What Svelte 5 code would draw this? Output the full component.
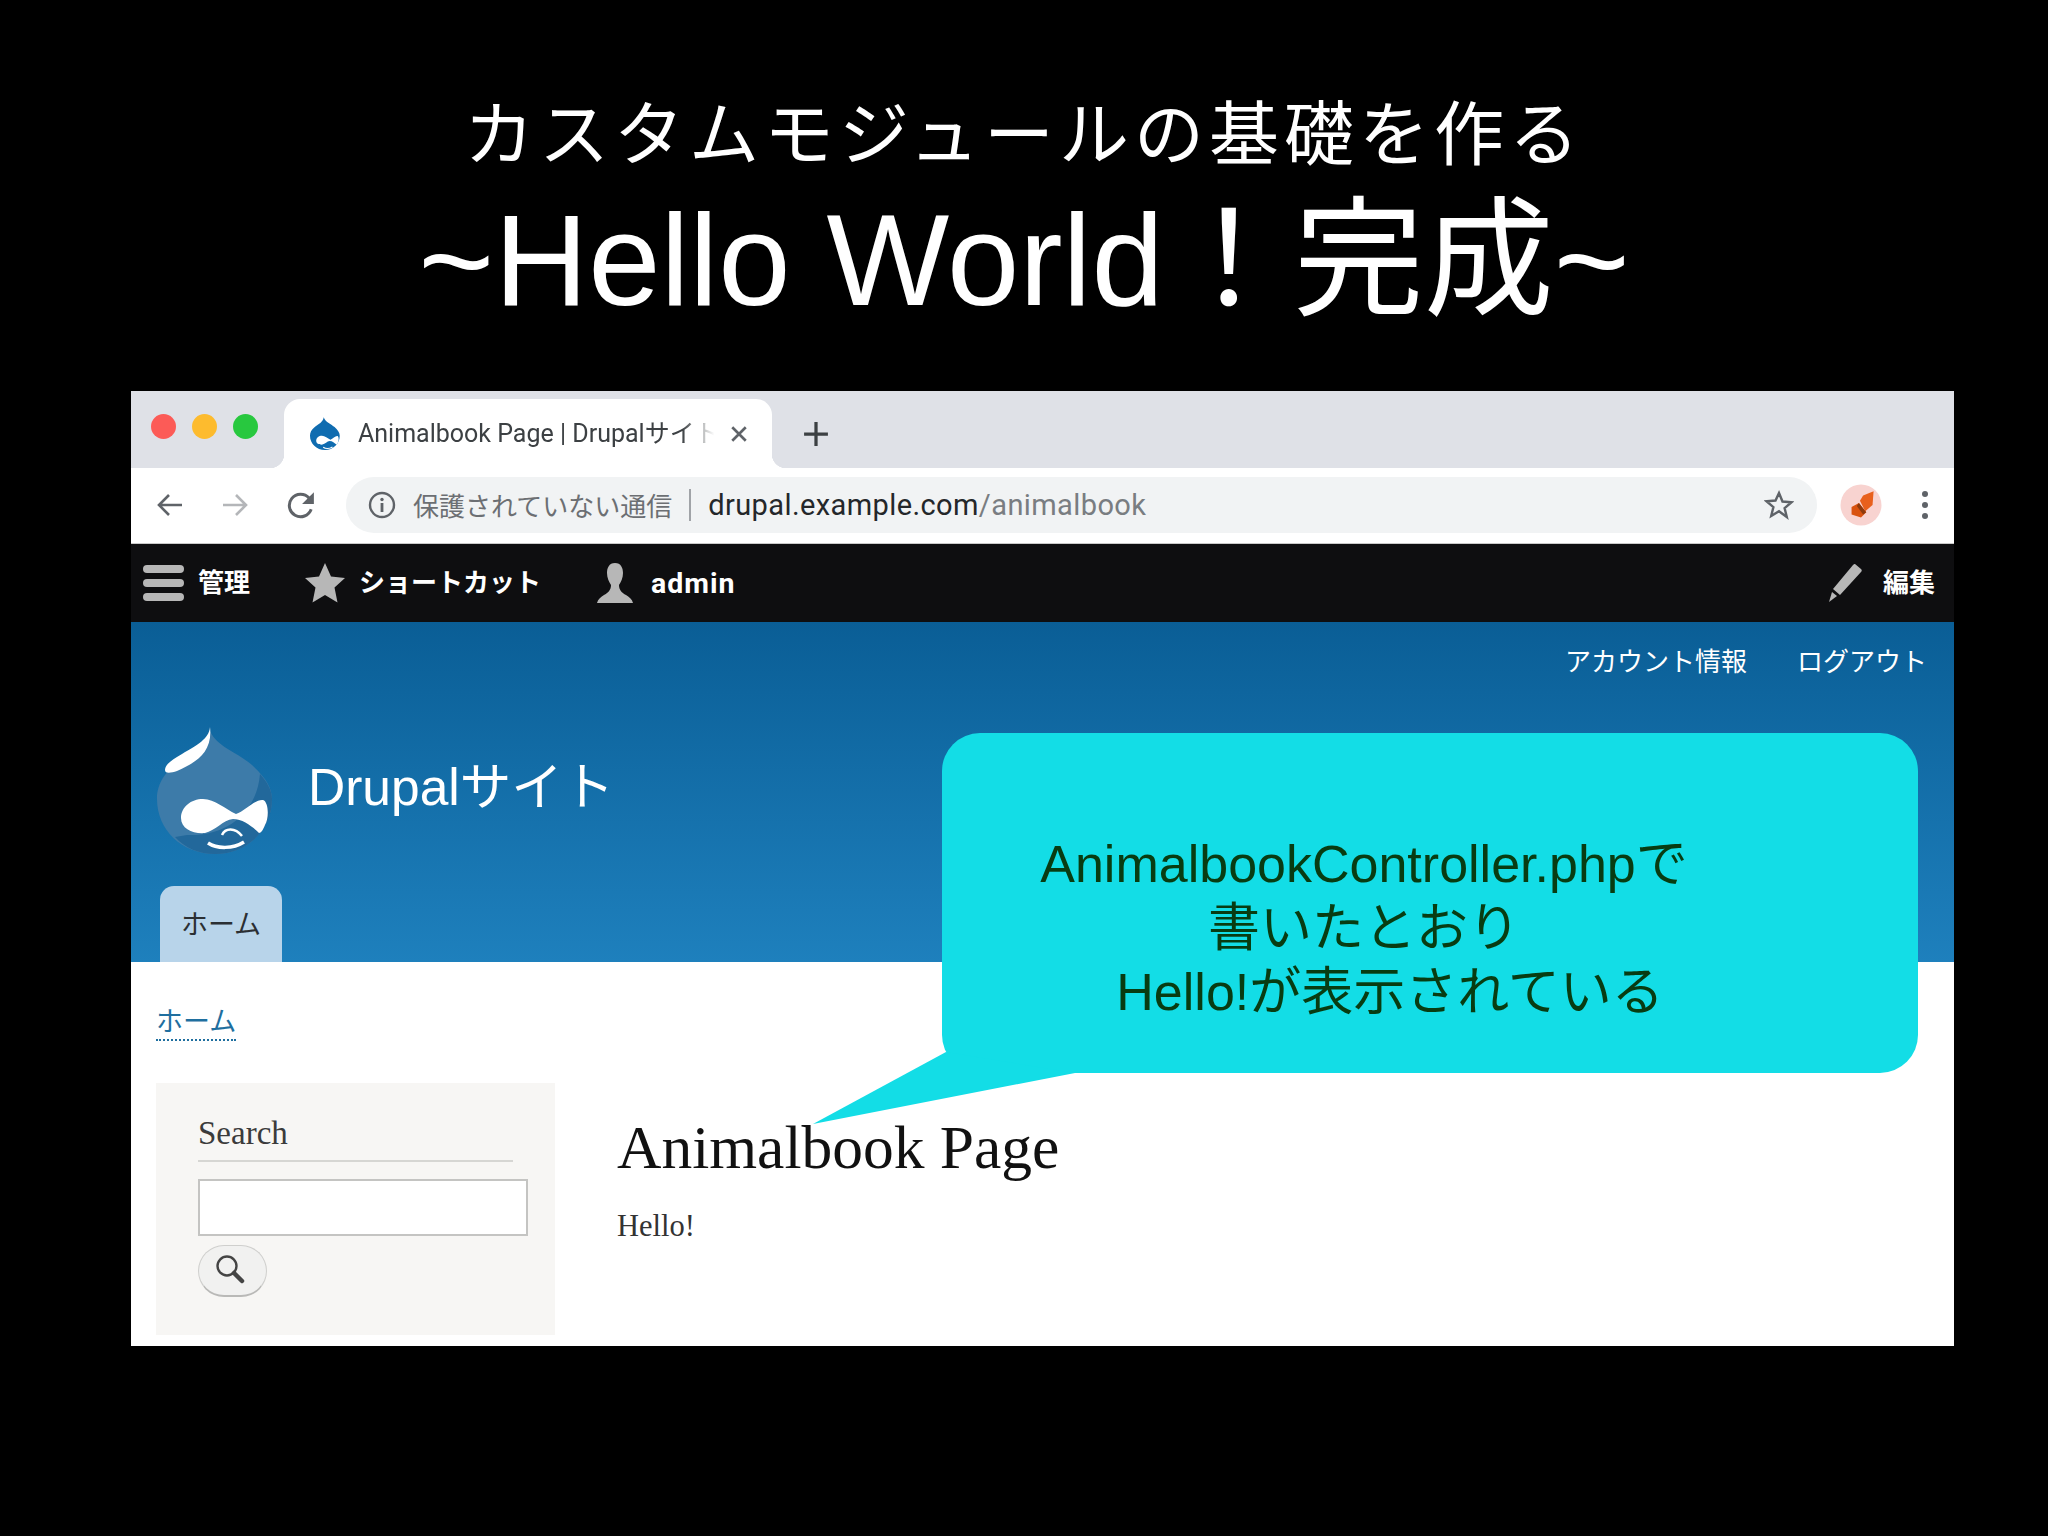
<script>
  const tabTitle = 'Animalbook Page | Drupalサイト'
</script>

<div class="slide">
  <header class="titles">
    <h1 class="sub">カスタムモジュールの基礎を作る</h1>
    <h1 class="main">~Hello World！完成~</h1>
  </header>

  <div class="browser">
    <div class="tabbar">
      <div class="lights">
        <i class="red"></i><i class="yellow"></i><i class="green"></i>
      </div>
      <div class="tab">
        <svg class="favicon" viewBox="0 0 116 130" width="30" height="34">
          <path d="M53 0C60 20 80 25 95 38 108 50 115 60 115 72 115 103 90 127 58 127 25 127 0 103 0 72 0 45 25 33 40 22 46 16 52 10 53 0z" fill="#0f6cb0"/>
          <path d="M24 91C24 80 34 72 46 72 58 72 68 82 79 87 88 84 98 72 106 73 112 75 112 92 108 98 106 103 104 106 102 106 96 100 86 92 76 92 66 93 58 104 48 106 36 107 24 102 24 91z" fill="#fff"/>
          <path d="M51 116C60 122 76 122 87 115" fill="none" stroke="#fff" stroke-width="5"/>
        </svg>
        <span class="tab-title">{tabTitle}</span>
        <svg class="close" viewBox="0 0 16 16" width="18" height="18">
          <path d="M2 2l12 12M14 2L2 14" stroke="#5f6368" stroke-width="2.4"/>
        </svg>
      </div>
      <svg class="plus" viewBox="0 0 24 24" width="26" height="26">
        <path d="M12 1v22M1 12h22" stroke="#3c4043" stroke-width="3"/>
      </svg>
    </div>

    <div class="toolbar">
      <svg class="nav" viewBox="0 0 28 28" width="28" height="28">
        <path d="M26 14H3M13 4L3 14l10 10" fill="none" stroke="#5f6368" stroke-width="2.6"/>
      </svg>
      <svg class="nav" viewBox="0 0 28 28" width="28" height="28">
        <path d="M2 14h23M15 4l10 10-10 10" fill="none" stroke="#b4b6b9" stroke-width="2.6"/>
      </svg>
      <svg class="nav" viewBox="0 0 28 28" width="30" height="30">
        <path d="M23.500 18a10.500 10.500 0 1 1-2-10.500" fill="none" stroke="#5f6368" stroke-width="2.800"/>
        <path d="M26 2v11H15z" fill="#5f6368"/>
      </svg>
      <div class="omnibox">
        <svg viewBox="0 0 28 28" width="28" height="28">
          <circle cx="14" cy="14" r="12" fill="none" stroke="#5f6368" stroke-width="2.400"/>
          <path d="M14 12v9" stroke="#5f6368" stroke-width="2.800"/>
          <circle cx="14" cy="8.500" r="1.700" fill="#5f6368"/>
        </svg>
        <span class="secure">保護されていない通信</span>
        <span class="sep"></span>
        <span class="url">drupal.example.com<span class="path">/animalbook</span></span>
        <svg class="bookmark" viewBox="0 0 30 30" width="30" height="30">
          <path d="M15 3l3.500 8.500 9 .7-6.900 5.900 2.200 8.900L15 21.300 7.200 26l2.200-8.900L2.500 11.200l9-.7z" fill="none" stroke="#5f6368" stroke-width="2.400"/>
        </svg>
      </div>
      <div class="avatar">
        <svg viewBox="0 0 40 40" width="42" height="42">
          <circle cx="20" cy="20" r="19.500" fill="#f8d3d0"/>
          <path d="M19 16l3-5 10-4-1 13-7 6z" fill="#e8601c"/>
          <path d="M11 22l7-4 7 9-5 5-9-3z" fill="#d9520f"/>
          <path d="M18 18l7 9-3 2-6-8z" fill="#8f3a0c"/>
        </svg>
      </div>
      <div class="dots"><i></i><i></i><i></i></div>
    </div>

    <nav class="adminbar">
      <div class="admin-left">
        <div class="admin-item">
          <div class="burger"><i></i><i></i><i></i></div>
          <span class="label">管理</span>
        </div>
        <div class="admin-item">
          <svg viewBox="0 0 40 40" width="40" height="40">
            <path d="M20 0l6 13.500 14 1.500-10.500 9.500 3 15L20 32l-12.500 7.500 3-15L0 15l14-1.500z" fill="#b7b7b7"/>
          </svg>
          <span class="label">ショートカット</span>
        </div>
        <div class="admin-item">
          <svg viewBox="0 0 36 40" width="38" height="40">
            <path d="M18 0c6 0 8 5 8 10 0 5-2 9-4 12 0 5 3 8 7 10 3 2 6 4 7 8H0c1-4 4-6 7-8 4-2 7-5 7-10-2-3-4-7-4-12 0-5 2-10 8-10z" fill="#b7b7b7"/>
          </svg>
          <span class="name">admin</span>
        </div>
      </div>
      <div class="admin-item">
        <svg class="pencil" viewBox="0 0 36 40" width="36" height="40">
          <path d="M28 1l6 5c1 1 1 2 0 3L13 32 6 26 26 2c1-1 1-1 2-1z" fill="#b7b7b7"/>
          <path d="M5 29l5 4-8 6z" fill="#b7b7b7"/>
        </svg>
        <span class="label">編集</span>
      </div>
    </nav>

    <div class="site-head">
      <div class="secondary">
        <span>アカウント情報</span>
        <span>ログアウト</span>
      </div>
      <div class="branding">
        <svg class="logo" viewBox="0 0 116 130" width="116" height="130">
          <path d="M53 4C60 20 80 25 95 38 108 50 115 60 115 72 115 103 90 127 58 127 25 127 0 103 0 72 0 45 25 33 40 22 46 16 52 10 53 4z" fill="#3d7ba9"/>
          <path d="M103 47C110 55 115 63 115 72 115 103 90 127 58 127 42 127 28 121 18 110L30 108C70 110 100 85 103 47z" fill="#22689b"/>
          <path d="M53 0C52 12 40 18 25 27 14 33 8 38 8 43 8 47 14 46 20 44 38 36 56 26 53 0z" fill="#fff"/>
          <path d="M24 91C24 80 34 72 46 72 58 72 68 82 79 87 88 84 98 72 106 73 112 75 112 92 108 98 106 103 104 106 102 106 96 100 86 92 76 92 66 93 58 104 48 106 36 107 24 102 24 91z" fill="#fff"/>
          <path d="M65 108C68 101 78 100 85 109" fill="none" stroke="#fff" stroke-width="2.500"/>
          <path d="M51 116C60 122 76 122 87 115" fill="none" stroke="#fff" stroke-width="3.500"/>
        </svg>
        <span class="site-name">Drupalサイト</span>
      </div>
      <div class="tabs"><span class="home-tab">ホーム</span></div>
    </div>

    <div class="page">
      <div class="crumb"><span>ホーム</span></div>
      <div class="columns">
        <aside class="sidebar">
          <h2>Search</h2>
          <div class="search-input"></div>
          <div class="search-btn">
            <svg viewBox="0 0 30 30" width="30" height="30">
              <circle cx="12" cy="12" r="9.500" fill="none" stroke="#444" stroke-width="2.400"/>
              <path d="M19 19l8 8" stroke="#444" stroke-width="4.500" stroke-linecap="round"/>
            </svg>
          </div>
        </aside>
        <main class="content">
          <h1>Animalbook Page</h1>
          <p>Hello!</p>
        </main>
      </div>
    </div>
  </div>

  <div class="callout">
    <svg class="tail" viewBox="0 0 270 80" width="270" height="80">
      <path d="M136 0L3 72 265 21z" fill="#13dde6"/>
    </svg>
    <span>AnimalbookController.phpで</span>
    <span>書いたとおり</span>
    <span class="shift">Hello!が表示されている</span>
  </div>
</div>

<style>
  :global(body) {
    margin: 0;
    background: #000;
  }
  .slide {
    position: relative;
    width: 2048px;
    height: 1536px;
    background: #000;
    font-family: "Liberation Sans", "Noto Sans CJK JP", sans-serif;
    overflow: hidden;
  }
  .titles {
    height: 391px;
    text-align: center;
    color: #fff;
  }
  .titles h1 {
    margin: 0;
    font-weight: 400;
    white-space: nowrap;
  }
  .sub {
    padding-top: 92px;
    font-size: 70px;
    line-height: 88px;
    letter-spacing: 5px;
  }
  .main {
    padding-top: 3px;
    font-size: 130px;
    line-height: 154px;
  }

  .browser {
    margin-left: 131px;
    width: 1823px;
    height: 955px;
    background: #fff;
    overflow: hidden;
  }

  .tabbar {
    display: flex;
    height: 77px;
    background: #dfe1e7;
  }
  .lights {
    display: flex;
    gap: 16px;
    padding: 23px 0 0 20px;
    width: 133px;
    box-sizing: border-box;
  }
  .lights i {
    width: 25px;
    height: 25px;
    border-radius: 50%;
  }
  .red { background: #fc5b57; }
  .yellow { background: #fdbb2e; }
  .green { background: #28c83f; }
  .tab {
    position: relative;
    display: flex;
    align-items: center;
    width: 488px;
    height: 69px;
    margin: 8px 0 0 20px;
    padding: 0 24px 0 26px;
    box-sizing: border-box;
    background: #fff;
    border-radius: 16px 16px 0 0;
  }
  .tab::before,
  .tab::after {
    content: '';
    position: absolute;
    bottom: 0;
    width: 14px;
    height: 14px;
  }
  .tab::before {
    left: -14px;
    background: radial-gradient(circle at 0 0, transparent 14px, #fff 14.500px);
  }
  .tab::after {
    right: -14px;
    background: radial-gradient(circle at 100% 0, transparent 14px, #fff 14.500px);
  }
  .tab-title {
    flex: 1;
    margin-left: 18px;
    font-family: Roboto, "Noto Sans CJK JP", sans-serif;
    font-size: 25px;
    line-height: 34px;
    color: #3c4043;
    white-space: nowrap;
    overflow: hidden;
    -webkit-mask-image: linear-gradient(90deg, #000 90%, transparent 99%);
    mask-image: linear-gradient(90deg, #000 90%, transparent 99%);
  }
  .close { margin-left: 12px; }
  .plus { margin: 30px 0 0 31px; }

  .toolbar {
    display: flex;
    align-items: center;
    height: 76px;
    box-sizing: border-box;
    padding: 0 0 2px 25px;
    border-bottom: 1px solid #c9c9c9;
    background: #fff;
  }
  .nav { margin-right: 37px; }
  .nav + .nav + .nav { margin-right: 0; }
  .omnibox {
    display: flex;
    align-items: center;
    width: 1471px;
    height: 56px;
    margin-left: 30px;
    padding: 0 26px 0 22px;
    box-sizing: border-box;
    background: #f1f3f4;
    border-radius: 28px;
  }
  .secure {
    margin-left: 17px;
    font-family: "Noto Sans CJK JP", sans-serif;
    font-size: 26px;
    color: #6c6f73;
    white-space: nowrap;
  }
  .sep {
    width: 2px;
    height: 32px;
    margin: 0 17px;
    background: #a0a3a7;
  }
  .url {
    flex: 1;
    font-family: Roboto, sans-serif;
    font-size: 29px;
    letter-spacing: 0.4px;
    color: #24272a;
    white-space: nowrap;
  }
  .path { color: #797d81; }
  .bookmark { margin-right: -3px; }
  .avatar {
    display: flex;
    margin-left: 23px;
  }
  .dots {
    display: flex;
    flex-direction: column;
    gap: 5px;
    margin-left: 40px;
  }
  .dots i {
    width: 6px;
    height: 6px;
    border-radius: 50%;
    background: #5f6368;
  }

  .adminbar {
    display: flex;
    justify-content: space-between;
    align-items: center;
    height: 78px;
    padding: 0 19px 0 12px;
    background: #0e0e10;
    color: #fff;
    font-size: 26px;
    font-weight: 700;
  }
  .admin-left {
    display: flex;
    gap: 55px;
  }
  .admin-item {
    display: flex;
    align-items: center;
    gap: 14px;
    white-space: nowrap;
  }
  .label {
    margin-top: -5px;
  }
  .name {
    margin-left: 3px;
    font-family: Roboto, sans-serif;
    font-size: 28.500px;
    letter-spacing: 1px;
  }
  .pencil { margin-right: 6px; }
  .burger {
    display: flex;
    flex-direction: column;
    gap: 6px;
    width: 41px;
  }
  .burger i {
    height: 8px;
    border-radius: 4px;
    background: #b7b7b7;
  }

  .site-head {
    height: 340px;
    box-sizing: border-box;
    background: linear-gradient(#0a5e96, #1e80bd);
    color: #fff;
  }
  .secondary {
    display: flex;
    justify-content: flex-end;
    gap: 50px;
    padding: 22px 27px 0 0;
    font-size: 26px;
    line-height: 36px;
  }
  .branding {
    display: flex;
    align-items: center;
    gap: 35px;
    margin-top: 47px;
    padding-left: 26px;
  }
  .site-name {
    font-size: 51.500px;
    margin-top: -19px;
  }
  .tabs {
    margin-top: 29px;
    padding-left: 29px;
  }
  .home-tab {
    display: block;
    width: 122px;
    height: 76px;
    box-sizing: border-box;
    padding-top: 21px;
    text-align: center;
    font-size: 27px;
    line-height: 36px;
    color: #2b2f33;
    background: #b8d4ea;
    border-radius: 14px 14px 0 0;
  }

  .page {
    padding: 43px 0 0 25px;
  }
  .crumb {
    height: 78px;
    font-size: 27px;
    line-height: 34px;
    color: #1f6f9f;
  }
  .crumb span {
    display: inline-block;
    border-bottom: 2px dotted #1f6f9f;
  }
  .columns {
    display: flex;
  }
  .sidebar {
    width: 399px;
    height: 252px;
    box-sizing: border-box;
    padding: 32px 0 0 42px;
    background: #f7f6f4;
  }
  .sidebar h2 {
    width: 315px;
    margin: 0 0 17px;
    padding-bottom: 9px;
    font-family: "Liberation Serif", serif;
    font-size: 33px;
    line-height: 36px;
    font-weight: 400;
    color: #3b3b3b;
    border-bottom: 2px solid #d6d6d3;
  }
  .search-input {
    width: 330px;
    height: 57px;
    box-sizing: border-box;
    background: #fff;
    border: 2px solid #c4c4c2;
  }
  .search-btn {
    display: flex;
    justify-content: center;
    align-items: center;
    width: 69px;
    height: 52px;
    margin-top: 9px;
    box-sizing: border-box;
    padding: 0 6px 4px 0;
    border: 1px solid #cfcfcd;
    border-bottom: 2px solid #b9b9b7;
    border-radius: 26px;
    background: #f1f1f0;
  }
  .content {
    padding-left: 62px;
    font-family: "Liberation Serif", serif;
  }
  .content h1 {
    margin: 29px 0 26px;
    font-size: 61.500px;
    line-height: 70px;
    font-weight: 400;
    color: #111;
    white-space: nowrap;
  }
  .content p {
    margin: 0;
    font-size: 30.500px;
    line-height: 36px;
    color: #333;
  }

  .callout {
    position: absolute;
    left: 942px;
    top: 733px;
    width: 976px;
    height: 340px;
    box-sizing: border-box;
    padding-top: 99px;
    display: flex;
    flex-direction: column;
    align-items: center;
    background: #13dde6;
    border-radius: 38px;
    font-size: 52px;
    line-height: 64px;
    color: #083c12;
    white-space: nowrap;
  }
  .callout span {
    position: relative;
    margin-right: 132px;
  }
  .callout .shift { margin-right: 80px; }
  .tail {
    position: absolute;
    left: -132px;
    top: 319px;
  }
</style>
